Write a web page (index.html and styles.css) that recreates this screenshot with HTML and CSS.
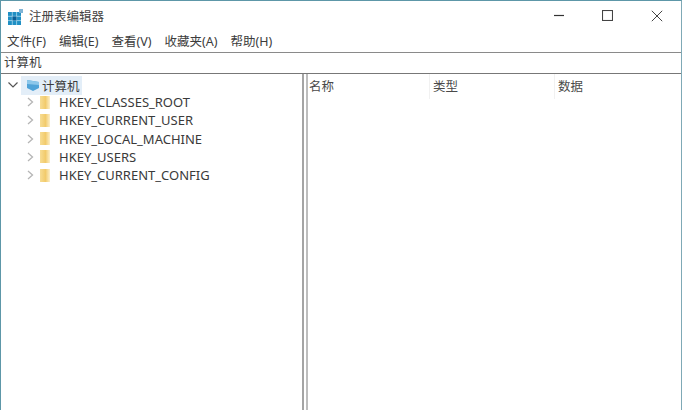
FILE: index.html
```html
<!DOCTYPE html>
<html lang="zh">
<head>
<meta charset="utf-8">
<title>注册表编辑器</title>
<link rel="stylesheet" href="styles.css">
</head>
<body>
<div class="window">
  <header class="titlebar">
    <svg class="app-icon" width="16" height="16" viewBox="0 0 16 16">
      <rect x="0" y="3" width="13" height="13" fill="#1f8fc4"/>
      <path d="M4.3 3v13M8.6 3v13M0 7.3h13M0 11.6h13" stroke="#bfe3f2" stroke-width=".7"/>
      <rect x="4.5" y="7.5" width="4" height="4" fill="#0b5f96"/>
      <rect x="11" y="0" width="4" height="4" fill="#7fb4d6"/>
    </svg>
    <span class="title">注册表编辑器</span>
    <div class="controls">
      <svg width="11" height="11" viewBox="0 0 11 11"><path d="M1 5.500h10" stroke="#333" stroke-width="1.200"/></svg>
      <svg width="11" height="11" viewBox="0 0 11 11"><rect x=".5" y=".5" width="10" height="10" fill="none" stroke="#444" stroke-width="1.100"/></svg>
      <svg width="12" height="12" viewBox="0 0 12 12"><path d="M.8.8l10.400 10.400M11.200.8L.8 11.200" stroke="#444" stroke-width="1"/></svg>
    </div>
  </header>
  <nav class="menu">
    <span>文件(F)</span><span>编辑(E)</span><span>查看(V)</span><span>收藏夹(A)</span><span>帮助(H)</span>
  </nav>
  <div class="address">计算机</div>
  <main class="panes">
    <section class="tree">
      <div class="root">
        <svg class="chev" width="10" height="10" viewBox="0 0 10 10"><path d="M.5 2.500L5 7l4.500-4.500" fill="none" stroke="#555" stroke-width="1.200"/></svg>
        <span class="root-label">
          <svg width="14" height="13" viewBox="0 0 14 13"><path d="M1 1l12 2v6l-6 3-6-3z" fill="#4fa3d8"/><path d="M1 1l12 2v3L1 5z" fill="#8cc7ea"/></svg>
          <span>计算机</span>
        </span>
      </div>
      <ul class="keys">
        <li><svg class="arrow" width="7" height="10" viewBox="0 0 7 10"><path d="M1 1l4.500 4L1 9" fill="none" stroke="#b5b5b5" stroke-width="1.300"/></svg><i class="folder"></i>HKEY_CLASSES_ROOT</li>
        <li><svg class="arrow" width="7" height="10" viewBox="0 0 7 10"><path d="M1 1l4.500 4L1 9" fill="none" stroke="#b5b5b5" stroke-width="1.300"/></svg><i class="folder"></i>HKEY_CURRENT_USER</li>
        <li><svg class="arrow" width="7" height="10" viewBox="0 0 7 10"><path d="M1 1l4.500 4L1 9" fill="none" stroke="#b5b5b5" stroke-width="1.300"/></svg><i class="folder"></i>HKEY_LOCAL_MACHINE</li>
        <li><svg class="arrow" width="7" height="10" viewBox="0 0 7 10"><path d="M1 1l4.500 4L1 9" fill="none" stroke="#b5b5b5" stroke-width="1.300"/></svg><i class="folder"></i>HKEY_USERS</li>
        <li><svg class="arrow" width="7" height="10" viewBox="0 0 7 10"><path d="M1 1l4.500 4L1 9" fill="none" stroke="#b5b5b5" stroke-width="1.300"/></svg><i class="folder"></i>HKEY_CURRENT_CONFIG</li>
      </ul>
    </section>
    <section class="list">
      <div class="cols">
        <span class="col col-name">名称</span>
        <span class="col col-type">类型</span>
        <span class="col col-data">数据</span>
      </div>
    </section>
  </main>
</div>
</body>
</html>
```
FILE: styles.css
```css
* { box-sizing: border-box; }
html, body { margin: 0; height: 100%; }
body {
  background: #fff;
  font-family: "Noto Sans", "Noto Sans CJK SC", sans-serif;
  color: #333;
  overflow: hidden;
}
.window {
  width: 682px;
  height: 410px;
  display: flex;
  flex-direction: column;
  border-top: 1px solid #5d97a8;
  border-left: 1px solid #5d97a8;
  border-right: 1px solid #7fa9b6;
}
.titlebar {
  height: 29px;
  flex: none;
  display: flex;
  align-items: center;
  padding: 2px 0 0 7px;
}
.app-icon { flex: none; }
.title { margin-left: 5px; font-size: 12.500px; line-height: 14px; color: #444; }
.controls {
  margin: -2px 0 0 auto;
  display: flex;
  align-items: center;
  gap: 38px;
  padding-right: 18px;
}
.menu {
  height: 20px;
  flex: none;
  display: flex;
  align-items: center;
  gap: 13px;
  padding: 2px 0 0 6px;
  font-size: 12.500px;
  line-height: 14px;
  color: #3c3c3c;
  border-bottom: 1px solid #8a8a8a;
  box-sizing: content-box;
}
.address {
  height: 21px;
  flex: none;
  padding-left: 3px;
  font-size: 12.500px;
  line-height: 19px;
  color: #3c3c3c;
  border-bottom: 1px solid #777;
}
.panes { flex: 1; display: flex; min-height: 0; }
.tree { width: 303px; flex: none; padding-top: 2px; border-right: 2px solid #a4a4a4; }
.list { flex: 1; border-left: 2px solid #bdbdbd; margin-left: 2px; }
.root { height: 18px; display: flex; align-items: center; padding-left: 7px; }
.root-label {
  display: flex;
  align-items: center;
  gap: 2px;
  margin-left: 3px;
  padding: 0 2px 0 5px;
  height: 19px;
  background: #e3eef8;
  font-size: 12.500px;
  color: #3c3c3c;
}
.keys { list-style: none; margin: -1px 0 0; padding: 0; }
.keys li {
  height: 18.250px;
  display: flex;
  align-items: center;
  padding-left: 26px;
  font-size: 13px;
  line-height: 16px;
  color: #3a3a3a;
}
.arrow { flex: none; }
.folder {
  flex: none;
  width: 10px;
  height: 13px;
  margin: 0 9px 0 6px;
  background: linear-gradient(90deg, #f7dd94, #f2cb6c 55%, #fcefca);
}
.cols { height: 25px; display: flex; font-size: 12.500px; line-height: 14px; color: #4a4a4a; }
.col { display: flex; align-items: center; padding-left: 1px; border-right: 1px solid #f1f1f1; }
.col-name { width: 122px; }
.col-type { width: 125px; padding-left: 3px; }
.col-data { width: 100px; padding-left: 3px; border-right: 0; }
```
